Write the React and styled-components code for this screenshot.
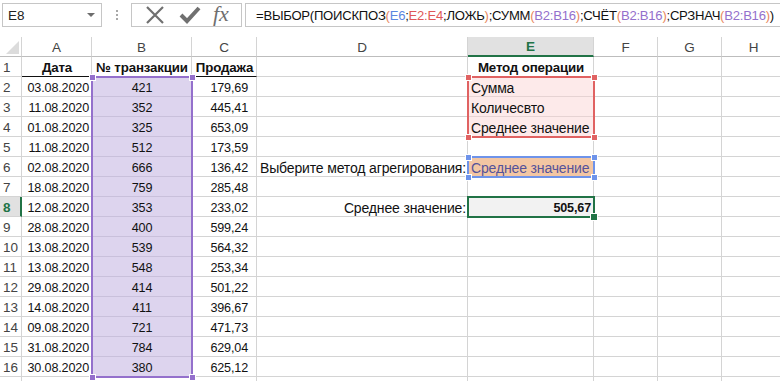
import React from 'react';
import styled, { createGlobalStyle } from 'styled-components';

const COLS = [22, 70, 100, 65, 211, 126, 64, 64, 64];
const LETTERS = ['A', 'B', 'C', 'D', 'E', 'F', 'G', 'H'];
const HEAD_H = 20;
const ROW_H = 20;

const GlobalStyle = createGlobalStyle`
  html, body { margin: 0; padding: 0; background: #fff; }
  body {
    font-family: "Liberation Sans", Arial, sans-serif;
    color: #111;
    overflow: hidden;
  }
`;

const Page = styled.div`
  width: 780px;
  height: 381px;
  overflow: hidden;
  background: #fff;
`;

const FormulaBar = styled.div`
  display: flex;
  align-items: center;
  height: 24px;
  padding: 3px 0 0 2px;
`;

const NameBox = styled.div`
  box-sizing: border-box;
  width: 100px;
  height: 24px;
  border: 1px solid #c6c6c6;
  display: flex;
  align-items: center;
  justify-content: space-between;
  padding: 0 6px 0 5px;
  font-size: 13.5px;
  color: #222;
`;

const DropArrow = styled.span`
  width: 0;
  height: 0;
  border-left: 4px solid transparent;
  border-right: 4px solid transparent;
  border-top: 4px solid #6d6d6d;
`;

const Grip = styled.div`
  display: flex;
  flex-direction: column;
  gap: 2px;
  margin: 0 13px 0 14px;
  span {
    width: 2px;
    height: 2px;
    background: #a8a8a8;
  }
`;

const FxBox = styled.div`
  box-sizing: border-box;
  width: 111px;
  height: 24px;
  border: 1px solid #c6c6c6;
  display: flex;
  align-items: center;
  justify-content: space-around;
  padding: 0 6px;
`;

const FxText = styled.span`
  font-family: "Liberation Serif", "Times New Roman", serif;
  font-style: italic;
  font-size: 22px;
  color: #6f6f6f;
  line-height: 1;
  margin-top: -2px;
`;

const FormulaInput = styled.div`
  box-sizing: border-box;
  flex: 1;
  height: 24px;
  margin-left: 3px;
  border: 1px solid #c6c6c6;
  border-right: none;
  display: flex;
  align-items: center;
  padding-left: 10px;
  white-space: nowrap;
  overflow: hidden;
  font-size: 13.1px;
  letter-spacing: -0.25px;
  color: #111;
`;

const Tok = styled.span`
  color: ${p => p.$color || 'inherit'};
`;

const SheetWrap = styled.div`
  position: relative;
  margin-top: 10px;
`;

const Grid = styled.div`
  display: grid;
  grid-template-columns: ${COLS.map(c => c + 'px').join(' ')};
  grid-template-rows: ${HEAD_H}px repeat(17, ${ROW_H}px);
`;

const Corner = styled.div`
  box-sizing: border-box;
  border-right: 1px solid #d4d4d4;
  border-bottom: 1px solid #bdbdbd;
  display: flex;
  align-items: flex-end;
  justify-content: flex-end;
  padding: 0 2px 2px 0;
  span {
    width: 0;
    height: 0;
    border-left: 13px solid transparent;
    border-bottom: 13px solid #dcdcdc;
  }
`;

const ColHead = styled.div`
  box-sizing: border-box;
  display: flex;
  align-items: center;
  justify-content: center;
  font-size: 13.5px;
  padding-top: 1px;
  color: ${p => (p.$active ? '#217346' : '#444')};
  font-weight: ${p => (p.$active ? 700 : 400)};
  background: ${p => (p.$active ? '#e1e1e1' : '#fff')};
  border-right: 1px solid #d4d4d4;
  border-bottom: ${p => (p.$active ? '2px solid #217346' : '1px solid #bdbdbd')};
`;

const RowHead = styled.div`
  box-sizing: border-box;
  display: flex;
  align-items: center;
  padding: 2px 0 0 3px;
  font-size: 13.5px;
  color: ${p => (p.$active ? '#217346' : '#444')};
  font-weight: ${p => (p.$active ? 700 : 400)};
  background: ${p => (p.$active ? '#e1e1e1' : '#fff')};
  border-right: ${p => (p.$active ? '2px solid #217346' : '1px solid #d4d4d4')};
  border-bottom: 1px solid #d4d4d4;
`;

const Cell = styled.div`
  box-sizing: border-box;
  display: flex;
  align-items: center;
  justify-content: ${p => ({ left: 'flex-start', center: 'center', right: 'flex-end' }[p.$align] || 'flex-start')};
  padding: 2px ${p => p.$pr ?? 2}px 0 3px;
  font-size: ${p => p.$size || 14}px;
  letter-spacing: -0.15px;
  white-space: nowrap;
  font-weight: ${p => (p.$bold ? 700 : 400)};
  color: ${p => p.$color || '#111'};
  background: ${p => p.$bg || 'transparent'};
  border-right: 1px solid ${p => p.$grid || '#d4d4d4'};
  border-bottom: 1px solid ${p => (p.$underline ? '#111' : p.$grid || '#d4d4d4')};
`;

const RangeBox = styled.div`
  position: absolute;
  box-sizing: border-box;
  border: 2px solid ${p => p.$color};
  pointer-events: none;
`;

const Handle = styled.span`
  position: absolute;
  width: ${p => p.$size}px;
  height: ${p => p.$size}px;
  background: ${p => p.$color};
  border: 1px solid #fff;
  ${p => (p.$v === 'top' ? `top: -${p.$size / 2 + 2}px;` : `bottom: -${p.$size / 2 + 2}px;`)}
  ${p => (p.$h === 'left' ? `left: -${p.$size / 2 + 2}px;` : `right: -${p.$size / 2 + 2}px;`)}
`;

const sales = [
  ['03.08.2020', '421', '179,69'],
  ['11.08.2020', '352', '445,41'],
  ['01.08.2020', '325', '653,09'],
  ['11.08.2020', '512', '173,59'],
  ['02.08.2020', '666', '136,42'],
  ['18.08.2020', '759', '285,48'],
  ['12.08.2020', '353', '233,02'],
  ['28.08.2020', '400', '599,24'],
  ['13.08.2020', '539', '564,32'],
  ['13.08.2020', '548', '253,34'],
  ['29.08.2020', '414', '501,22'],
  ['14.08.2020', '411', '396,67'],
  ['09.08.2020', '721', '471,73'],
  ['31.08.2020', '784', '629,04'],
  ['30.08.2020', '380', '625,12'],
];

const methods = ['Сумма', 'Количесвто', 'Среднее значение'];

const PURPLE = '#9470cc';
const RED = '#e06262';
const BLUE = '#6e93ea';
const GREEN = '#217346';
const ORANGE = '#e8875e';
const NUM = 12.6;
const HEAD = 13.3;

function cellFor(r, col) {
  if (r === 1) {
    if (col === 'A') return { text: 'Дата', align: 'center', bold: true, underline: true, size: HEAD };
    if (col === 'B') return { text: '№ транзакции', align: 'center', bold: true, underline: true, size: HEAD };
    if (col === 'C') return { text: 'Продажа', align: 'center', bold: true, underline: true, size: HEAD };
    if (col === 'E') return { text: 'Метод операции', align: 'center', bold: true, size: HEAD };
    return {};
  }
  const row = sales[r - 2];
  if (row) {
    if (col === 'A') return { text: row[0], align: 'right', pr: 2, size: NUM };
    if (col === 'B') return { text: row[1], align: 'center', bg: '#ddd4ee', grid: '#c9c0db', size: NUM };
    if (col === 'C') return { text: row[2], align: 'right', pr: 8, size: NUM };
  }
  if (col === 'E' && r >= 2 && r <= 4) return { text: methods[r - 2], bg: '#fdeaea', grid: '#e6d3d3' };
  if (r === 6 && col === 'D') return { text: 'Выберите метод агрегирования:', align: 'right', pr: 1 };
  if (r === 6 && col === 'E') return { text: 'Среднее значение', bg: '#f3c6a3', color: '#55529a' };
  if (r === 8 && col === 'D') return { text: 'Среднее значение:', align: 'right', pr: 1 };
  if (r === 8 && col === 'E') return { text: '505,67', align: 'right', bold: true, bg: '#f2f2f2', size: NUM };
  return {};
}

const colLeft = i => COLS.slice(0, i + 1).reduce((a, b) => a + b, 0);
const rowTop = r => HEAD_H + (r - 1) * ROW_H;

function Range({ col, from, to, color, size = 5, corners = ['tl', 'tr', 'bl', 'br'] }) {
  const i = LETTERS.indexOf(col);
  const style = {
    left: colLeft(i) - 1,
    top: rowTop(from) - 1,
    width: COLS[i + 1] + 2,
    height: (to - from + 1) * ROW_H + 2,
  };
  return (
    <RangeBox $color={color} style={style}>
      {corners.map(c => (
        <Handle
          key={c}
          $color={color}
          $size={size}
          $v={c[0] === 't' ? 'top' : 'bottom'}
          $h={c[1] === 'l' ? 'left' : 'right'}
        />
      ))}
    </RangeBox>
  );
}

const Formula = () => (
  <FormulaInput>
    <Tok>=ВЫБОР(ПОИСКПОЗ</Tok>
    <Tok $color={ORANGE}>(</Tok>
    <Tok $color="#5b86e0">E6</Tok>
    <Tok>;</Tok>
    <Tok $color="#e05858">E2:E4</Tok>
    <Tok>;ЛОЖЬ</Tok>
    <Tok $color={ORANGE}>)</Tok>
    <Tok>;СУММ</Tok>
    <Tok $color={ORANGE}>(</Tok>
    <Tok $color={PURPLE}>B2:B16</Tok>
    <Tok $color={ORANGE}>)</Tok>
    <Tok>;СЧЁТ</Tok>
    <Tok $color={ORANGE}>(</Tok>
    <Tok $color={PURPLE}>B2:B16</Tok>
    <Tok $color={ORANGE}>)</Tok>
    <Tok>;СРЗНАЧ</Tok>
    <Tok $color={ORANGE}>(</Tok>
    <Tok $color={PURPLE}>B2:B16</Tok>
    <Tok $color={ORANGE}>)</Tok>
    <Tok>)</Tok>
  </FormulaInput>
);

export default function App() {
  const rows = [];
  for (let r = 1; r <= 17; r++) {
    rows.push(
      <RowHead key={'h' + r} $active={r === 8}>{r <= 16 ? r : ''}</RowHead>
    );
    LETTERS.forEach(col => {
      const c = cellFor(r, col);
      rows.push(
        <Cell
          key={col + r}
          $align={c.align}
          $bold={c.bold}
          $bg={c.bg}
          $grid={c.grid}
          $color={c.color}
          $underline={c.underline}
          $pr={c.pr}
          $size={c.size}
        >
          {c.text}
        </Cell>
      );
    });
  }

  return (
    <Page>
      <GlobalStyle />
      <FormulaBar>
        <NameBox>
          <span>E8</span>
          <DropArrow />
        </NameBox>
        <Grip><span /><span /><span /></Grip>
        <FxBox>
          <svg width="22" height="20" viewBox="0 0 22 20">
            <path d="M3 2 L19 18 M19 2 L3 18" stroke="#707070" strokeWidth="2.2" fill="none" />
          </svg>
          <svg width="22" height="20" viewBox="0 0 22 20">
            <path d="M2 10 L8 16 L20 3" stroke="#707070" strokeWidth="4" fill="none" />
          </svg>
          <FxText>fx</FxText>
        </FxBox>
        <Formula />
      </FormulaBar>

      <SheetWrap>
        <Grid>
          <Corner><span /></Corner>
          {LETTERS.map(l => (
            <ColHead key={l} $active={l === 'E'}>{l}</ColHead>
          ))}
          {rows}
        </Grid>
        <Range col="B" from={2} to={16} color={PURPLE} />
        <Range col="E" from={2} to={4} color={RED} />
        <Range col="E" from={6} to={6} color={BLUE} />
        <Range col="E" from={8} to={8} color={GREEN} size={6} corners={['br']} />
      </SheetWrap>
    </Page>
  );
}
